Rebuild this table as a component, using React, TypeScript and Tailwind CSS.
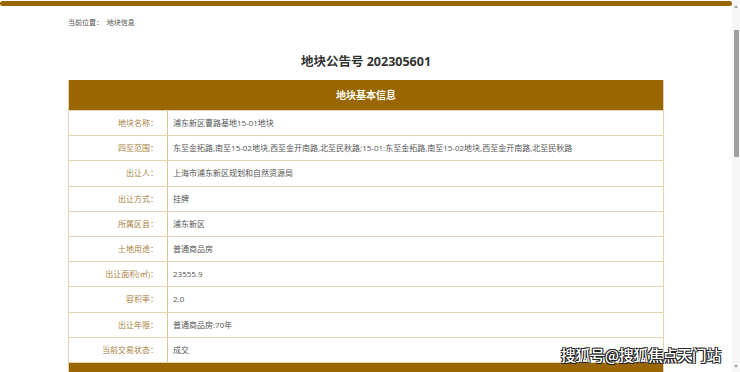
import React from "react";

const rows: [string, string][] = [
  ["地块名称：", "浦东新区曹路基地15-01地块"],
  [
    "四至范围：",
    "东至金拓路,南至15-02地块,西至金开南路,北至民秋路;15-01:东至金拓路,南至15-02地块,西至金开南路,北至民秋路",
  ],
  ["出让人：", "上海市浦东新区规划和自然资源局"],
  ["出让方式：", "挂牌"],
  ["所属区县：", "浦东新区"],
  ["土地用途：", "普通商品房"],
  ["出让面积(㎡)：", "23555.9"],
  ["容积率：", "2.0"],
  ["出让年限：", "普通商品房:70年"],
  ["当前交易状态：", "成交"],
];

export default function App() {
  return (
    <div
      className="relative flex h-[372px] w-[740px] overflow-hidden bg-white"
      style={{ fontFamily: '"Open Sans", "Noto Sans CJK SC", sans-serif' }}
    >
      <div className="flex-1">
        <div className="mt-px h-[5px] rounded-full bg-[#996600]" />
        <div className="mx-auto w-[596px]">
          <div className="mt-[12px] text-[7px] leading-[10px] text-[#555]">
            当前位置：&nbsp;&nbsp;地块信息
          </div>
          <h1 className="mt-[25px] text-center text-[12.5px] leading-[18px] font-bold text-[#333]">
            地块公告号 202305601
          </h1>
          <div className="mt-[9px] border-x border-[#e3d3b0]">
            <div className="flex h-[31px] items-center justify-center border-b border-[#e3d3b0] bg-[#996600] text-[10px] font-bold text-white">
              地块基本信息
            </div>
            {rows.map(([label, value]) => (
              <div
                key={label}
                className="flex h-[25.2px] border-b border-[#e3d3b0] text-[8px]"
              >
                <div className="flex w-[99px] items-center justify-end border-r border-[#d9c49a] pr-[9px] text-[#a8823f]">
                  {label}
                </div>
                <div className="flex flex-1 items-center pl-[5px] text-[#555]">
                  {value}
                </div>
              </div>
            ))}
            <div className="h-[20px] bg-[#996600]" />
          </div>
        </div>
      </div>

      <div className="flex w-[8px] flex-col items-center bg-[#f7f7f7]">
        <div className="mt-[5px] h-0 w-0 border-x-[2.5px] border-b-[3px] border-x-transparent border-b-[#a3a3a3]" />
        <div className="mt-[22px] h-[127px] w-[5px] bg-[#a0a0a0]" />
        <div className="mt-auto mb-[4px] h-0 w-0 border-x-[2.5px] border-t-[3px] border-x-transparent border-t-[#a3a3a3]" />
      </div>

      <div
        className="absolute top-[346px] left-[561px] text-[14.6px] leading-[18px] font-medium text-white"
        style={{
          fontFamily: '"Noto Sans CJK SC", sans-serif',
          textShadow:
            "1px 1px 0 #222, -1px -1px 0 #222, 1px -1px 0 #222, -1px 1px 0 #222",
        }}
      >
        搜狐号@搜狐焦点天门站
      </div>
    </div>
  );
}
